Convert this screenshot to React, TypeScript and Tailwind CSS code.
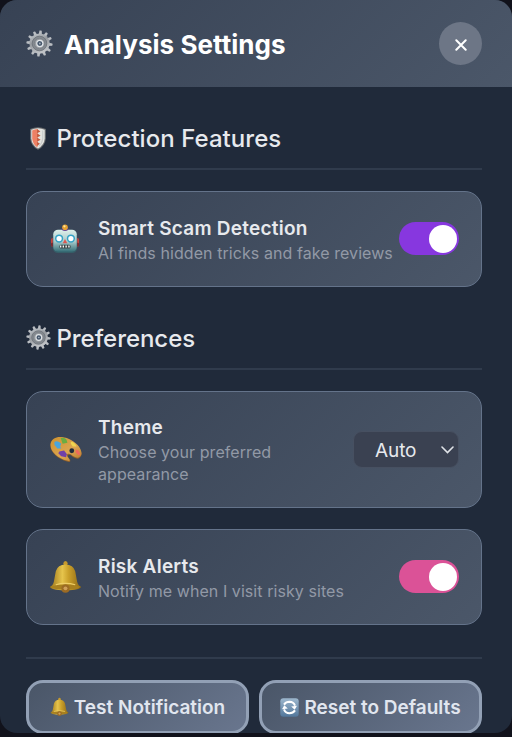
import type { ReactNode } from 'react';

function Gear({ size }: { size: number }) {
  const teeth = Array.from({ length: 12 }, (_, i) => i * 30 + 5);
  return (
    <svg width={size} height={size} viewBox="0 0 40 40" className="block shrink-0">
      <defs>
        <linearGradient id="steel" x1="0" y1="0" x2="0.4" y2="1">
          <stop offset="0" stopColor="#c4c9ce" />
          <stop offset="0.5" stopColor="#969a9f" />
          <stop offset="1" stopColor="#bfc2c6" />
        </linearGradient>
      </defs>
      {teeth.map((a) => (
        <path key={a} d="M17.5 8 L18.3 1 Q20 0 21.7 1 L22.5 8Z" fill="#b9bdc2" transform={`rotate(${a} 20 20)`} />
      ))}
      <circle cx="20" cy="20" r="15" fill="url(#steel)" />
      <circle cx="20" cy="20" r="10.8" fill="#858a90" stroke="#686e76" strokeWidth="1.2" />
      <circle cx="20" cy="20" r="7.7" fill="#999da2" stroke="#747a81" strokeWidth="1" />
      <circle cx="20.5" cy="20" r="4.6" fill="#45566b" stroke="#e0e4e7" strokeWidth="1.8" />
      <circle cx="20.5" cy="20" r="1.3" fill="#a7b1bd" />
    </svg>
  );
}

function Shield() {
  return (
    <svg width="18" height="25" viewBox="0 0 19 26" className="block">
      <path d="M1.2 3Q9.5-1 17.8 3V13Q17 21 9.5 25Q2 21 1.2 13Z" fill="#6d6f71" />
      <path d="M2.4 3.8Q9.5.3 16.6 3.8V13Q16 20 9.5 23.5Q3 20 2.4 13Z" fill="#e2e3df" />
      <path d="M3.4 4.5Q6 3 9 2.9V22.5Q4 19.3 3.4 13Z" fill="#ed8064" />
      <path d="M8.5 3L12 5.5L8.5 7.5L12.2 10L8.5 12L12.2 14.2L8.5 16.3L11.5 18.5L8.5 21Z" fill="#c45a3e" />
      <path d="M14.5 4.5V13Q14 18 10.5 20.8" fill="none" stroke="#c7c9c9" strokeWidth="1.2" />
    </svg>
  );
}

function Robot() {
  return (
    <svg width="30" height="32" viewBox="0 0 32 34" className="block">
      <defs>
        <linearGradient id="face" x1="0" y1="0" x2="0" y2="1">
          <stop offset="0" stopColor="#dff0ea" />
          <stop offset="0.55" stopColor="#a6c8c9" />
          <stop offset="1" stopColor="#356f78" />
        </linearGradient>
      </defs>
      <rect x="1" y="16" width="30" height="9" rx="2" fill="#c5453f" />
      <rect x="1" y="21" width="30" height="4" rx="1.5" fill="#7c292f" />
      <rect x="3" y="7" width="26" height="25" rx="5.5" fill="#365e68" />
      <rect x="3.5" y="7" width="25" height="23.5" rx="5" fill="url(#face)" />
      <path d="M12.7 5h6.6v2.5q-3.3 2-6.6 0z" fill="#68408f" />
      <circle cx="16" cy="4.5" r="3" fill="#e5a231" />
      <circle cx="15.4" cy="3.5" r="1.2" fill="#ffe49c" />
      <circle cx="9.7" cy="16.5" r="3.6" fill="#fff" stroke="#35a3c6" strokeWidth="1.6" />
      <circle cx="22.3" cy="16.5" r="3.6" fill="#fff" stroke="#35a3c6" strokeWidth="1.6" />
      <path d="M16 17l2.4 4.6h-4.8z" fill="#dd574f" />
      <rect x="10" y="23" width="12" height="4" rx="1.6" fill="#3b4748" />
      <path d="M11.4 24v2M14.2 24v2M17.2 24v2M20.2 24v2" stroke="#fff" strokeWidth="1.4" />
    </svg>
  );
}

function Palette() {
  return (
    <svg width="34" height="27" viewBox="0 0 34 28" className="block">
      <defs>
        <linearGradient id="wood" x1="0" y1="0" x2="1" y2="1">
          <stop offset="0" stopColor="#cd922f" />
          <stop offset="0.6" stopColor="#dca652" />
          <stop offset="1" stopColor="#ba772c" />
        </linearGradient>
      </defs>
      <path d="M1 9C2 2 10-1 19 3C27 6 34 14 33 20C31 26 25 23 22 20C19 19 18 21 20 23C23 26 21 28 18 26.5C9 24 0 17 1 9Z" fill="#8e602c" />
      <path d="M1 8C2 1.5 10-1 19 2.5C27 5.5 34 13 33 19C31 25 25 22 22 19C18 17 17 20 19 22C22 25 21 27 18 25.5C9 23 0 16 1 8Z" fill="url(#wood)" />
      <path d="M5 6q4-2 7 2l-1 3 1 2-4 0-3-4z" fill="#48a5dd" />
      <path d="M11.5 2q4-1 6 2l1 3-5 1z" fill="#6aad42" />
      <path d="M22 6q4 0 6 5l-4 0-2-3z" fill="#efd54f" />
      <path d="M27 14l3 1 2 4-2 1-3-3z" fill="#ee695c" />
      <path d="M10 16l5-1 3 4-1 3-5-1-3-3z" fill="#7040a9" />
      <circle cx="23" cy="15.3" r="2.5" fill="#202b3b" />
    </svg>
  );
}

function Bell({ width, height }: { width: number; height: number }) {
  return (
    <svg width={width} height={height} viewBox="0 0 34 34" className="block shrink-0">
      <defs>
        <linearGradient id="brass" x1="0" y1="0" x2="1" y2="0">
          <stop offset="0" stopColor="#9c7418" />
          <stop offset="0.4" stopColor="#e6c44c" />
          <stop offset="0.6" stopColor="#caa02a" />
          <stop offset="1" stopColor="#8d6715" />
        </linearGradient>
      </defs>
      <ellipse cx="17" cy="3" rx="2.2" ry="2.6" fill="#c79a2c" />
      <path d="M7 11Q9 4 17 4Q25 4 27 11L29 22Q30 26 33 27Q33 30 17 31Q1 30 1 27Q4 26 5 22Z" fill="url(#brass)" />
      <path d="M2 27Q17 22 32 27Q30 30 17 30Q5 30 2 27Z" fill="#a8801f" />
      <path d="M7 25Q17 22 27 25" fill="none" stroke="#efcf68" strokeWidth="1.3" />
      <circle cx="17" cy="29" r="4.2" fill="#9c6b24" />
      <circle cx="17" cy="28.7" r="2" fill="#cfa05a" />
    </svg>
  );
}

function Refresh() {
  return (
    <svg width="19" height="19" viewBox="0 0 19 19" className="block shrink-0">
      <defs>
        <linearGradient id="tile" x1="0" y1="0" x2="0" y2="1">
          <stop offset="0" stopColor="#9db7cd" />
          <stop offset="1" stopColor="#52779b" />
        </linearGradient>
      </defs>
      <rect x=".3" y=".3" width="18.4" height="18.4" rx="3" fill="url(#tile)" />
      <path d="M4 6.6Q6 3.7 9.5 3.7Q13.6 3.8 15 7.6" fill="none" stroke="#fff" strokeWidth="2" />
      <path d="M15 12.4Q13 15.3 9.5 15.3Q5.4 15.2 4 11.4" fill="none" stroke="#fff" strokeWidth="2" />
      <path d="M2 11.2L4.3 7.2L7.8 10.6Z M17 7.8L14.7 11.8L11.2 8.4Z" fill="#fff" />
    </svg>
  );
}

function SectionTitle({ icon, children }: { icon: ReactNode; children: ReactNode }) {
  return (
    <h2 className="flex h-[53px] items-start border-b-2 border-[#303b4c] text-2xl leading-[43px] font-medium text-[#e7e9ed]">
      <span className="flex h-11 w-[30.5px] items-center">{icon}</span>
      {children}
    </h2>
  );
}

function Card({ icon, title, text, control, className }: { icon: ReactNode; title: string; text: ReactNode; control: ReactNode; className: string }) {
  return (
    <div className={`flex items-center rounded-[17px] border-[1.5px] border-[#64738a] bg-linear-135 from-[#374254] to-[#4b5769] pr-[22px] pl-[21px] ${className}`}>
      <div className="flex w-[50px] shrink-0 pl-px">{icon}</div>
      <div className="min-w-0 flex-1 pt-px whitespace-nowrap">
        <h3 className="text-[19px] leading-[26px] font-semibold tracking-[0.24px] text-[#e7e9ed]">{title}</h3>
        <p className="text-base leading-[22px] tracking-[0.07px] text-[#9299a6]">{text}</p>
      </div>
      {control}
    </div>
  );
}

function Toggle({ className }: { className: string }) {
  return (
    <button role="switch" aria-checked="true" className={`mb-px flex h-[33px] w-[60px] shrink-0 items-center justify-end rounded-full pr-0.5 ${className}`}>
      <span className="size-7 rounded-full bg-white" />
    </button>
  );
}

export default function App() {
  return (
    <div className="h-[737px] w-[512px] overflow-hidden bg-[#11121b] font-['Inter','Liberation_Sans',sans-serif]">
      <main className="h-[733px] overflow-hidden rounded-[17px] bg-[#202a3a]">
        <header className="flex h-[87px] items-center justify-between bg-linear-135 from-[#374254] to-[#4b5769] pr-[30px] pl-[26px]">
          <h1 className="flex items-center gap-[11px] text-[26px] leading-8 font-bold whitespace-nowrap text-white">
            <Gear size={27} />
            <span className="pt-0.5 tracking-[0.05px]">Analysis Settings</span>
          </h1>
          <button aria-label="Close" className="flex size-[43px] items-center justify-center rounded-full bg-[#6d7686]">
            <svg width="12" height="12" viewBox="0 0 12 12" className="mt-[3px]"><path d="M1.3 1.3L10.7 10.7M10.7 1.3L1.3 10.7" stroke="white" strokeWidth="2" strokeLinecap="round" /></svg>
          </button>
        </header>
        <div className="pt-[30px] pr-[30px] pl-[26px]">
          <SectionTitle icon={<div className="pb-px pl-[3px]"><Shield /></div>}><span className="tracking-[0.05px]">Protection Features</span></SectionTitle>
          <Card className="mt-[21px] h-24" icon={<div className="pl-px"><Robot /></div>} title="Smart Scam Detection" text="AI finds hidden tricks and fake reviews" control={<Toggle className="bg-[#8737df]" />} />
          <div className="pt-[30px]">
            <SectionTitle icon={<div className="pb-[3px]"><Gear size={25} /></div>}><span className="tracking-[-0.05px]">Preferences</span></SectionTitle>
          </div>
          <Card
            className="mt-[21px] h-[117px]"
            icon={<Palette />}
            title="Theme"
            text={<>Choose your preferred<br />appearance</>}
            control={
              <button className="flex h-[37px] w-[106px] shrink-0 items-center justify-between rounded-[9px] border border-[#475061] bg-[#3a4151] pr-1 pl-[21px] text-[19px] text-[#e7e9ed]">
                <span className="pt-1 tracking-[-0.1px]">Auto</span>
                <svg width="13" height="8" viewBox="0 0 13 8"><path d="M1 1L6.5 6.5L12 1" fill="none" stroke="#e0e3e8" strokeWidth="1.6" strokeLinecap="round" /></svg>
              </button>
            }
          />
          <Card className="mt-[21px] h-24" icon={<Bell width={33} height={34} />} title="Risk Alerts" text="Notify me when I visit risky sites" control={<Toggle className="bg-[#db5297]" />} />
          <footer className="mt-8 grid grid-cols-2 gap-[10px] border-t-2 border-[#303b4c] pt-[21px]">
            <button className="flex h-[54px] items-center justify-center gap-[5px] rounded-[17px] border-[3px] border-[#92a0b5] bg-linear-135 from-[#4a5668] to-[#69768e] text-[19px] font-semibold whitespace-nowrap text-[#e1e6ef]">
              <Bell width={19} height={20} /><span className="pt-0.5">Test Notification</span>
            </button>
            <button className="flex h-[54px] items-center justify-center gap-[5px] rounded-[17px] border-[3px] border-[#92a0b5] bg-linear-135 from-[#4a5668] to-[#69768e] text-[19px] font-semibold whitespace-nowrap text-[#e1e6ef]">
              <Refresh /><span className="pt-0.5">Reset to Defaults</span>
            </button>
          </footer>
        </div>
      </main>
    </div>
  );
}
